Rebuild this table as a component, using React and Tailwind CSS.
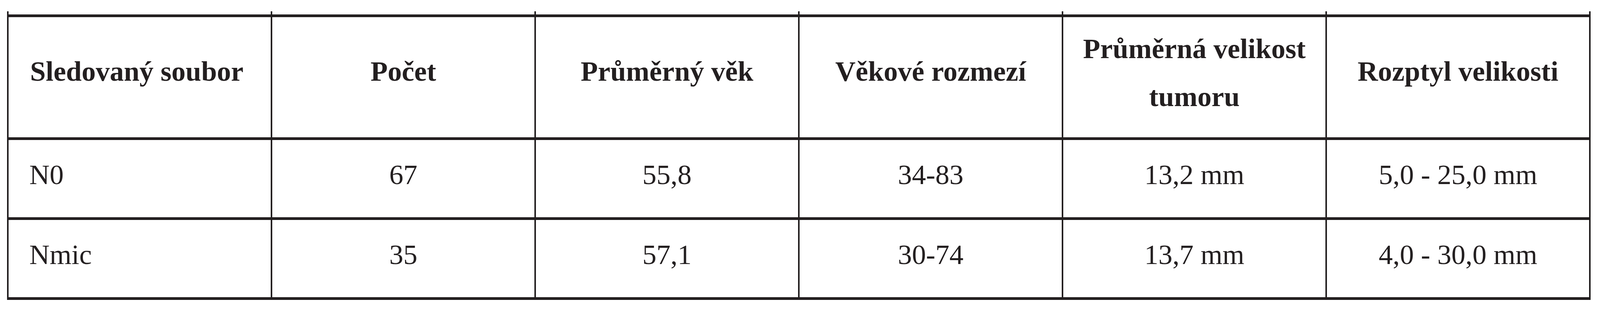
const headers = [
  ["Sledovaný soubor"],
  ["Počet"],
  ["Průměrný věk"],
  ["Věkové rozmezí"],
  ["Průměrná velikost", "tumoru"],
  ["Rozptyl velikosti"],
];

const rows = [
  ["N0", "67", "55,8", "34-83", "13,2 mm", "5,0 - 25,0 mm"],
  ["Nmic", "35", "57,1", "30-74", "13,7 mm", "4,0 - 30,0 mm"],
];

export default function App() {
  return (
    <div className="bg-white w-full h-[800px] pl-[18px] pt-[37px] text-[#231f20] font-['Liberation_Serif','Times_New_Roman',serif]">
      <div className="grid grid-cols-6 w-[4054px] border-l-[4px] border-t-[7px] border-[#231f20]">
        {headers.map((lines, i) => (
          <div
            key={i}
            className={`relative h-[315px] border-r-[4px] border-b-[7px] border-[#231f20] flex items-center text-[72px] leading-[123px] font-bold ${
              i === 0 ? "justify-start pl-[55px]" : "justify-center text-center"
            } ${lines.length > 1 ? "pb-[23px]" : "pb-[29px]"}`}
          >
            {i === 0 && (
              <span className="absolute -top-[15px] -left-[4px] w-[4px] h-[8px] bg-[#231f20]" />
            )}
            <span className="absolute -top-[15px] -right-[4px] w-[4px] h-[8px] bg-[#231f20]" />
            <div>
              {lines.map((l, j) => (
                <div key={j} className="whitespace-nowrap">
                  {l}
                </div>
              ))}
            </div>
          </div>
        ))}
        {rows.map((r, ri) =>
          r.map((c, ci) => (
            <div
              key={`${ri}-${ci}`}
              className={`h-[205px] border-r-[4px] border-b-[7px] border-[#231f20] flex items-center pb-[20px] text-[72px] leading-[123px] whitespace-nowrap ${
                ci === 0 ? "justify-start pl-[53px]" : "justify-center"
              }`}
            >
              {c}
            </div>
          ))
        )}
      </div>
    </div>
  );
}
